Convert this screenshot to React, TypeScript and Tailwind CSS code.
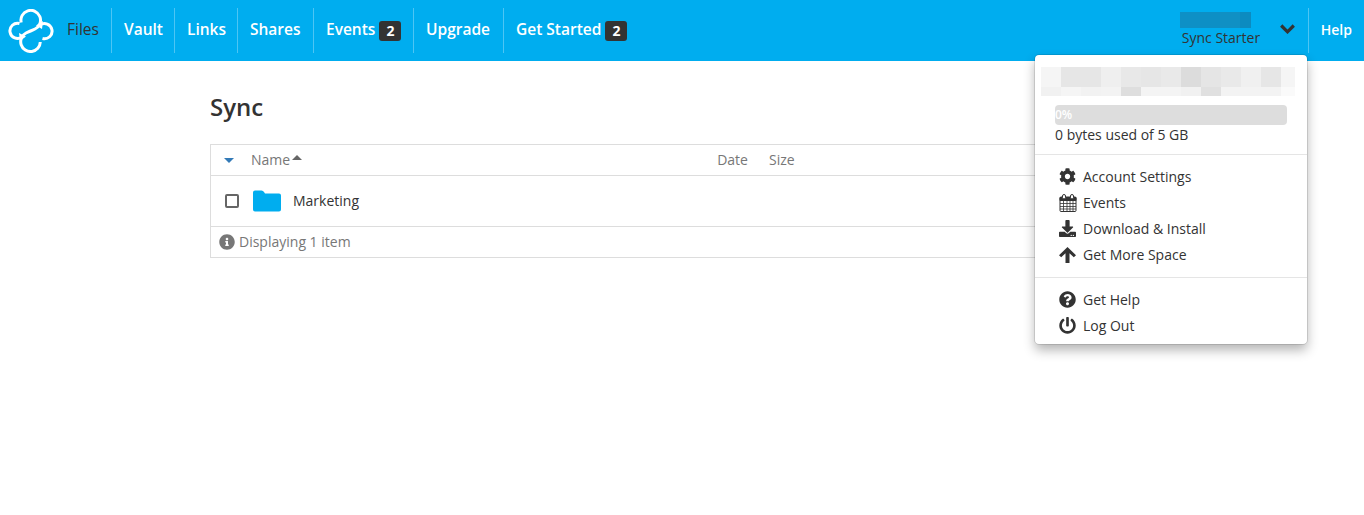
import { FaCog, FaDownload, FaInfoCircle, FaPowerOff, FaQuestionCircle } from "react-icons/fa";

const font = { fontFamily: '"Open Sans", sans-serif' };

const blueBlur = ["bg-[#0e90c6]", "bg-[#0d8fc5]", "bg-[#1090c4]", "bg-[#0c8bc0]"];
const greyTop = ["bg-[#f5f5f5]", "bg-[#e6e6e6]", "bg-[#e6e6e6]", "bg-[#efefef]", "bg-[#e8e8e8]", "bg-[#e6e6e6]", "bg-[#e9e9e9]", "bg-[#dcdcdc]", "bg-[#e5e5e5]", "bg-[#e9e9e9]", "bg-[#f0f0f0]", "bg-[#e6e6e6]", "bg-[#f5f5f5]"];
const greyBottom = ["bg-[#f1f1f1]", "bg-[#f5f5f5]", "bg-[#f2f2f2]", "bg-[#f3f3f3]", "bg-[#dedede]", "bg-[#f4f4f4]", "bg-[#f4f4f4]", "bg-[#f1f1f1]", "bg-[#e0e0e0]", "bg-[#f3f3f3]", "bg-[#f3f3f3]", "bg-[#f3f3f3]", "bg-[#fafafa]"];

function Logo() {
  return (
    <svg width="46" height="44" viewBox="0 0 46 44" fill="none" stroke="white" strokeWidth="3">
      <path d="M13.200 13.500 A9.800 9.800 0 1 1 27 20 C24 21.500 21 22.500 18 24 A9.800 9.800 0 1 0 32.300 33" />
      <path d="M11.500 14.500 A7.600 7.600 0 1 0 14 28" />
      <path d="M34.500 29.500 A7.600 7.600 0 1 0 32 16" />
      <path d="M11 24 L18 27.500 L12 32 z" fill="white" stroke="none" />
      <path d="M35 12 L28 16.500 L34 20 z" fill="white" stroke="none" />
    </svg>
  );
}

function Calendar() {
  return (
    <svg width="18" height="18" viewBox="0 0 18 18" fill="none" stroke="#333" strokeWidth="1">
      <rect x="1" y="3" width="16" height="14.500" rx="1" />
      <path d="M1 3.500h16v3H1z" fill="#333" />
      <path d="M1 9.500h16M1 12.500h16M1 15h16M4.500 6v11M8 6v11M11 6v11M14 6v11" strokeWidth="0.8" />
      <rect x="3.500" y="0.500" width="3" height="4.500" rx="1.500" fill="white" />
      <rect x="11.500" y="0.500" width="3" height="4.500" rx="1.500" fill="white" />
    </svg>
  );
}

function ArrowUp() {
  return (
    <svg width="17" height="16" viewBox="0 0 17 16">
      <path d="M8.500 0 L17 8.200 L14.800 10.300 L10.500 6.200 V16 H6.500 V6.200 L2.200 10.300 L0 8.200 z" fill="#333" />
    </svg>
  );
}

function NavItem({ label, badge, width }: { label: string; badge?: string; width: string }) {
  return (
    <div className={`${width} flex h-[45px] items-center gap-[4px] border-l border-white/30 pl-3 text-[15.500px] font-semibold text-white`}>
      <span className="mb-[2px]">{label}</span>
      {badge && (
        <span className="flex h-[20px] w-[22px] items-center justify-center rounded-[3px] bg-[#333333] text-[14px] font-bold text-white">
          {badge}
        </span>
      )}
    </div>
  );
}

function MenuItem({ icon, label }: { icon: React.ReactNode; label: string }) {
  return (
    <div className="flex h-[26px] items-center text-[14px] text-[#333333]">
      <span className="mt-[1px] flex w-[48px] justify-start pl-[24px] text-[17px]">{icon}</span>
      <span>{label}</span>
    </div>
  );
}

export default function App() {
  return (
    <div style={font} className="relative h-[515px] w-[1364px] overflow-hidden bg-white text-[#333333]">
      <header className="flex h-[61px] items-center bg-[#00adef] pl-[8px]">
        <Logo />
        <div className="flex h-[45px] w-[57px] items-center pb-[2px] pl-[13px] text-[15.500px] text-[#333333]">Files</div>
        <NavItem label="Vault" width="w-[63px]" />
        <NavItem label="Links" width="w-[63px]" />
        <NavItem label="Shares" width="w-[76px]" />
        <NavItem label="Events" badge="2" width="w-[100px]" />
        <NavItem label="Upgrade" width="w-[90px]" />
        <NavItem label="Get Started" badge="2" width="w-[136px]" />
        <div className="ml-auto flex items-center">
          <div className="mb-[2px] flex w-[80px] flex-col items-start">
            <div className="flex h-[16px] w-[71px] overflow-hidden">
              {blueBlur.map((c, i) => (
                <div key={i} className={`${c} w-[20px] shrink-0`} />
              ))}
            </div>
            <div className="ml-[2px] whitespace-nowrap text-[14px] leading-[19px] text-[#333333]">Sync Starter</div>
          </div>
          <div className="mb-[4px] flex w-[48px] justify-center pl-[8px]">
            <svg width="15" height="10" viewBox="0 0 15 10" fill="none" stroke="#333333" strokeWidth="3.200">
              <path d="M1.200 1.500 L7.500 7.800 L13.800 1.500" />
            </svg>
          </div>
          <div className="flex h-[45px] items-center border-l border-white/30 px-3 pb-[3px] text-[14px] font-semibold text-white">Help</div>
        </div>
      </header>

      <main className="ml-[210px] w-[944px]">
        <h1 className="mt-[29px] text-[24px] font-semibold leading-[33px] text-[#333333]">Sync</h1>
        <div className="mt-[21px] border border-[#dddddd] text-[14px]">
          <div className="flex h-[30px] items-center text-[#777777]">
            <svg width="10" height="5" viewBox="0 0 10 5" className="ml-[13px]">
              <path d="M0 0h10L5 5z" fill="#337ab7" />
            </svg>
            <span className="mb-[1px] ml-[17px]">Name</span>
            <svg width="10" height="5" viewBox="0 0 10 5" className="mb-[5px] ml-[2px]">
              <path d="M0 5h10L5 0z" fill="#666666" />
            </svg>
            <span className="mb-[1px] ml-[415px]">Date</span>
            <span className="mb-[1px] ml-[21px]">Size</span>
          </div>
          <div className="flex h-[51px] items-center border-t border-[#dddddd]">
            <div className="ml-[14px] h-[14px] w-[14px] rounded-[2px] border-2 border-[#666666]" />
            <svg width="28" height="22" viewBox="0 0 28 22" className="ml-[14px]">
              <path d="M0 2.500a2 2 0 0 1 2-2h6.500a3 3 0 0 1 2.500 1.500l1 1.500h14a2 2 0 0 1 2 2v14a2 2 0 0 1-2 2H2a2 2 0 0 1-2-2z" fill="#00adef" />
            </svg>
            <span className="mb-[2px] ml-[12px] text-[#333333]">Marketing</span>
          </div>
          <div className="flex h-[31px] items-center border-t border-[#dddddd] pl-[8px] text-[#777777]">
            <FaInfoCircle className="text-[16px]" />
            <span className="mb-[2px] ml-[4px]">Displaying 1 item</span>
          </div>
        </div>
      </main>

      <div className="absolute left-[1035px] top-[55px] h-[289px] w-[272px] rounded-[4px] bg-white shadow-[0_6px_12px_rgba(0,0,0,0.3)] outline outline-1 outline-black/10">
        <div className="ml-[6px] mt-[12px] w-[254px] overflow-hidden">
          <div className="flex h-[20px]">
            {greyTop.map((c, i) => (
              <div key={i} className={`${c} w-[20px] shrink-0`} />
            ))}
          </div>
          <div className="flex h-[9px]">
            {greyBottom.map((c, i) => (
              <div key={i} className={`${c} w-[20px] shrink-0`} />
            ))}
          </div>
        </div>
        <div className="mx-[20px] mt-[9px] h-[20px] rounded-[4px] bg-[#dddddd] text-[12px] font-semibold leading-[20px] text-white">0%</div>
        <div className="ml-[20px] text-[14px] leading-[20px]">0 bytes used of 5 GB</div>
        <div className="mt-[9px] h-px bg-[#e5e5e5]" />
        <div className="mb-[10px] mt-[8px]">
          <MenuItem icon={<FaCog />} label="Account Settings" />
          <MenuItem icon={<Calendar />} label="Events" />
          <MenuItem icon={<FaDownload />} label="Download & Install" />
          <MenuItem icon={<ArrowUp />} label="Get More Space" />
        </div>
        <div className="h-px bg-[#e5e5e5]" />
        <div className="mt-[8px]">
          <MenuItem icon={<FaQuestionCircle />} label="Get Help" />
          <MenuItem icon={<FaPowerOff />} label="Log Out" />
        </div>
      </div>
    </div>
  );
}
